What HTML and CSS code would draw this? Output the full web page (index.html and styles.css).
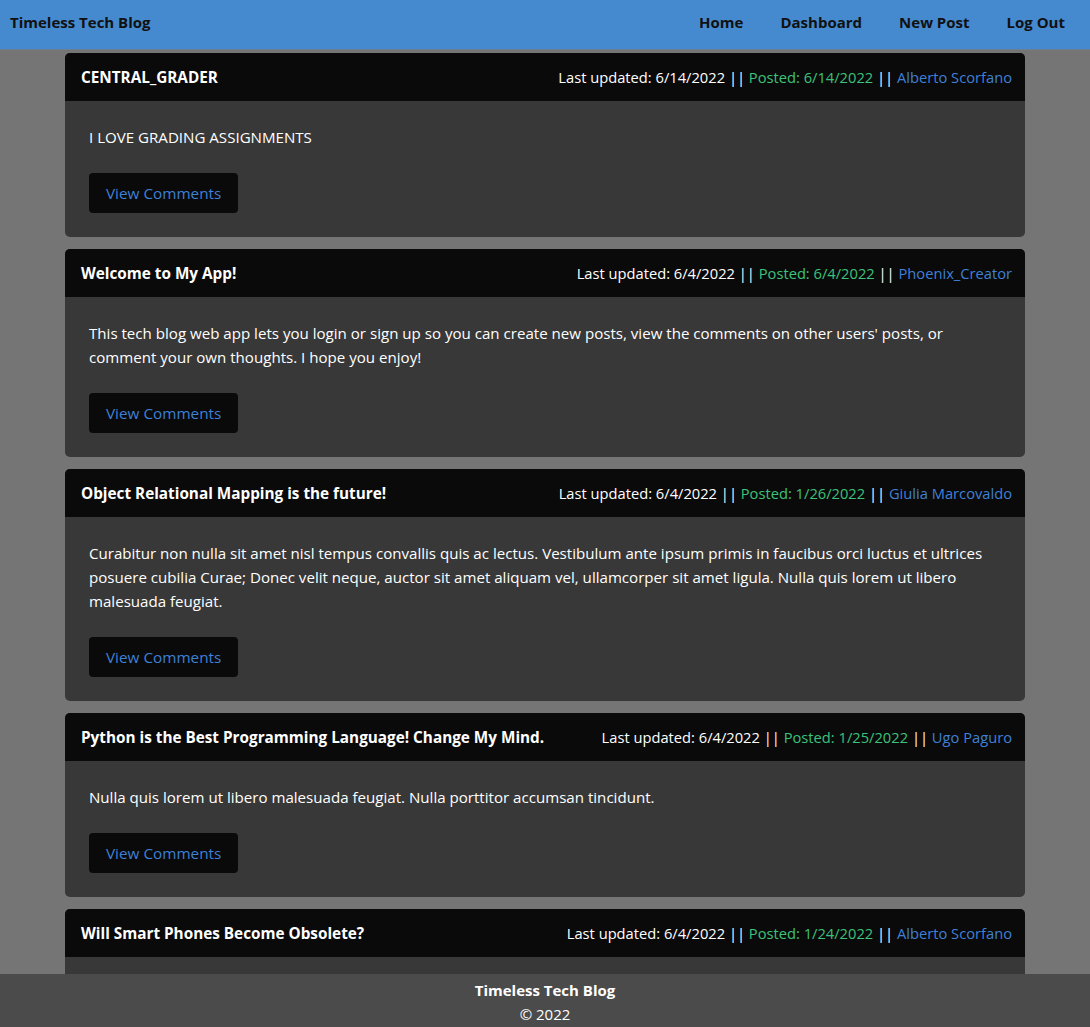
FILE: index.html
```html
<!DOCTYPE html>
<html lang="en">
<head>
<meta charset="utf-8">
<title>Timeless Tech Blog</title>
<link rel="stylesheet" href="styles.css">
</head>
<body>
<nav class="navbar">
  <a class="brand" href="#">Timeless Tech Blog</a>
  <div class="nav-links">
    <a href="#">Home</a>
    <a href="#">Dashboard</a>
    <a href="#">New Post</a>
    <a href="#">Log Out</a>
  </div>
</nav>
<main class="posts">
  <article class="card">
    <header class="card-header">
      <h2 class="title">CENTRAL_GRADER</h2>
      <p class="meta">Last updated: 6/14/2022 || <span class="posted">Posted: 6/14/2022</span> || <a class="author" href="#">Alberto Scorfano</a></p>
    </header>
    <div class="card-body">
      <p>I LOVE GRADING ASSIGNMENTS</p>
      <a class="btn" href="#">View Comments</a>
    </div>
  </article>
  <article class="card">
    <header class="card-header">
      <h2 class="title">Welcome to My App!</h2>
      <p class="meta">Last updated: 6/4/2022 || <span class="posted">Posted: 6/4/2022</span> || <a class="author" href="#">Phoenix_Creator</a></p>
    </header>
    <div class="card-body">
      <p>This tech blog web app lets you login or sign up so you can create new posts, view the comments on other users' posts, or comment your own thoughts. I hope you enjoy!</p>
      <a class="btn" href="#">View Comments</a>
    </div>
  </article>
  <article class="card">
    <header class="card-header">
      <h2 class="title">Object Relational Mapping is the future!</h2>
      <p class="meta">Last updated: 6/4/2022 || <span class="posted">Posted: 1/26/2022</span> || <a class="author" href="#">Giulia Marcovaldo</a></p>
    </header>
    <div class="card-body">
      <p>Curabitur non nulla sit amet nisl tempus convallis quis ac lectus. Vestibulum ante ipsum primis in faucibus orci luctus et ultrices posuere cubilia Curae; Donec velit neque, auctor sit amet aliquam vel, ullamcorper sit amet ligula. Nulla quis lorem ut libero malesuada feugiat.</p>
      <a class="btn" href="#">View Comments</a>
    </div>
  </article>
  <article class="card">
    <header class="card-header">
      <h2 class="title">Python is the Best Programming Language! Change My Mind.</h2>
      <p class="meta">Last updated: 6/4/2022 || <span class="posted">Posted: 1/25/2022</span> || <a class="author" href="#">Ugo Paguro</a></p>
    </header>
    <div class="card-body">
      <p>Nulla quis lorem ut libero malesuada feugiat. Nulla porttitor accumsan tincidunt.</p>
      <a class="btn" href="#">View Comments</a>
    </div>
  </article>
  <article class="card">
    <header class="card-header">
      <h2 class="title">Will Smart Phones Become Obsolete?</h2>
      <p class="meta">Last updated: 6/4/2022 || <span class="posted">Posted: 1/24/2022</span> || <a class="author" href="#">Alberto Scorfano</a></p>
    </header>
    <div class="card-body">
      <p>Lorem ipsum dolor sit amet, consectetur adipiscing elit.</p>
      <a class="btn" href="#">View Comments</a>
    </div>
  </article>
</main>
<footer class="footer">
  <p class="footer-title">Timeless Tech Blog</p>
  <p class="footer-copy">© 2022</p>
</footer>
</body>
</html>
```
FILE: styles.css
```css
* { box-sizing: border-box; }
html, body {
  margin: 0;
  padding: 0;
}
body {
  background: #757575;
  font-family: "Open Sans", "Noto Sans", sans-serif;
  font-size: 15px;
  color: #fff;
  padding-bottom: 60px;
}
a { text-decoration: none; }
p { margin: 0; }

.navbar {
  height: 50px;
  background: #458acf;
  display: flex;
  align-items: center;
  justify-content: space-between;
  padding: 0 25px 5px 10px;
  border-bottom: 1px solid #6b7f93;
}
.brand {
  color: #111;
  font-weight: 700;
  font-size: 15px;
}
.nav-links {
  display: flex;
  gap: 37px;
}
.nav-links a {
  color: #111;
  font-weight: 700;
  font-size: 15px;
}

.posts {
  width: 960px;
  margin: 3px auto 0;
  display: flex;
  flex-direction: column;
  gap: 12px;
}
.card {
  border-radius: 5px;
  overflow: hidden;
  background: #383838;
}
.card-header {
  height: 48px;
  background: #0a0a0a;
  display: flex;
  align-items: center;
  justify-content: space-between;
  padding: 0 13px 0 16px;
}
.title {
  margin: 0;
  font-size: 15.3px;
  font-weight: 700;
  color: #fff;
}
.meta {
  font-size: 14.7px;
  color: #fff;
}
.posted { color: #3cc27a; }
.author { color: #3f80d6; }

.card-body {
  padding: 24px;
  line-height: 24px;
  font-size: 15.1px;
}
.card-body p {
  margin-bottom: 24px;
}
.btn {
  display: inline-block;
  height: 40px;
  line-height: 40px;
  padding: 0 17px;
  background: #0a0a0a;
  border-radius: 4px;
  color: #3f80d6;
  font-size: 15.3px;
}

.footer {
  position: fixed;
  left: 0;
  right: 0;
  bottom: 0;
  height: 53px;
  background: #4b4b4b;
  text-align: center;
  padding-top: 4px;
  line-height: 24px;
}
.footer-title { font-weight: 700; font-size: 15px; }
.footer-copy { font-size: 15px; }
```
